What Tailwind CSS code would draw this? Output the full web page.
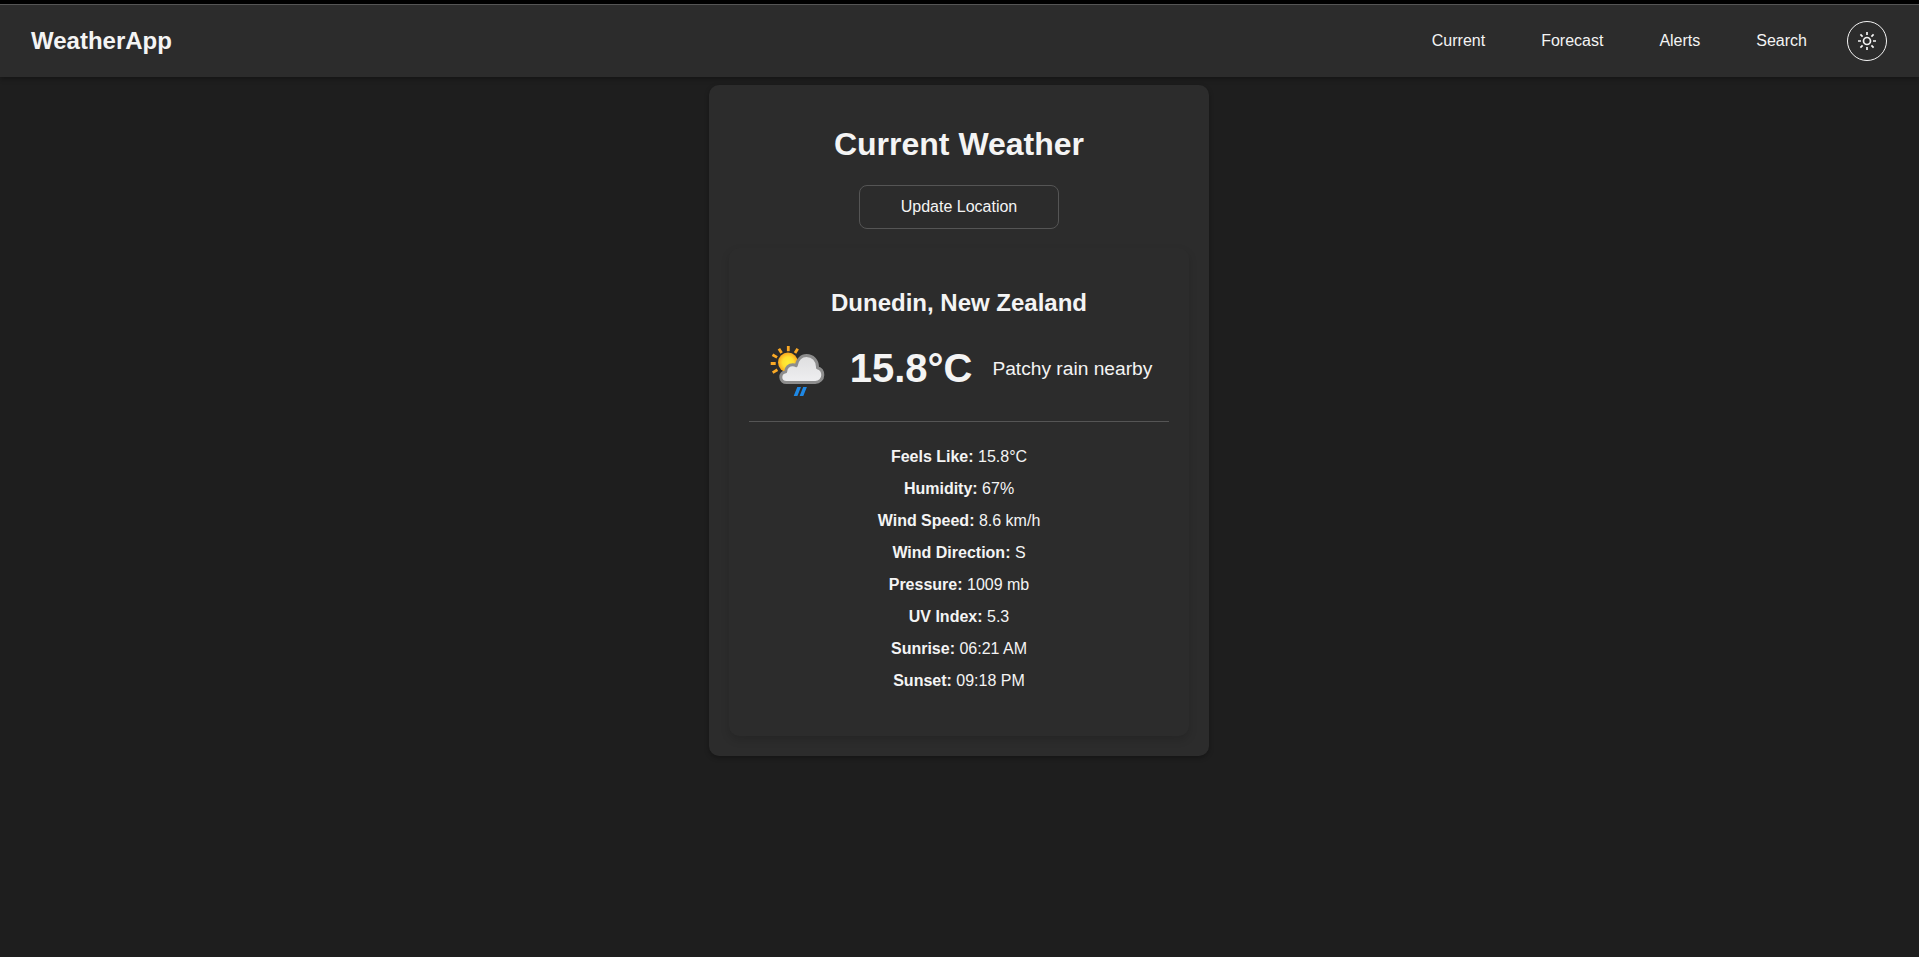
<!DOCTYPE html>
<html lang="en">
<head>
<meta charset="utf-8">
<title>WeatherApp</title>
<script src="https://cdn.jsdelivr.net/npm/@tailwindcss/browser@4"></script>
</head>
<body class="h-screen overflow-hidden bg-[#1e1e1e] font-['Liberation_Sans',Arial,sans-serif] text-base text-[#f4f4f4]">
<div class="h-1 bg-black"></div>
<header class="flex h-[73px] items-center justify-between border-t border-[#555] bg-[#2c2c2c] pl-[31px] pr-8 shadow-[0_2px_5px_rgba(0,0,0,0.3)]">
  <div class="text-2xl font-bold">WeatherApp</div>
  <nav class="flex items-center gap-10 leading-[17px]">
    <a class="px-2 pb-px">Current</a>
    <a class="px-2 pb-px">Forecast</a>
    <a class="px-2 pb-px">Alerts</a>
    <a class="pl-2 pb-px">Search</a>
    <button class="flex size-10 items-center justify-center rounded-full border border-[#f4f4f4]" aria-label="Toggle theme">
      <svg class="size-5" viewBox="0 0 20 20" fill="none" stroke="#f4f4f4" stroke-width="1.7">
        <circle cx="10" cy="10" r="3.5"/>
        <path d="M10 1v3M10 16v3M1 10h3M16 10h3M3.400 3.400l2.200 2.200M14.400 14.400l2.200 2.200M3.400 16.600l2.200-2.200M14.400 5.600l2.200-2.200"/>
      </svg>
    </button>
  </nav>
</header>
<main class="ml-[709px] mt-2 h-[671px] w-[500px] rounded-[10px] bg-[#2c2c2c] px-5 pt-[41px] text-center shadow-[0_2px_5px_rgba(0,0,0,0.3)]">
  <h1 class="text-[32px] font-bold leading-[37px]">Current Weather</h1>
  <button class="mt-[22px] h-11 w-[200px] rounded-lg border border-[#555] pb-px leading-[17px]">Update Location</button>
  <section class="mt-[19px] h-[488px] rounded-[10px] bg-[#2c2c2c] px-5 pt-[41px] shadow-[0_4px_8px_rgba(0,0,0,0.15)]">
    <h2 class="text-2xl font-bold leading-7">Dunedin, New Zealand</h2>
    <div class="mt-[19px] flex items-center justify-center gap-5 border-b border-[#555] pb-[21px]">
      <svg class="size-16 shrink-0" viewBox="0 0 64 64">
        <defs>
          <radialGradient id="sun"><stop offset="0" stop-color="#ffee35"/><stop offset=".55" stop-color="#ffdf30"/><stop offset="1" stop-color="#faa51e"/></radialGradient>
          <linearGradient id="cloud" x1="0" y1="0" x2="0" y2="1"><stop offset="0" stop-color="#dededf"/><stop offset="1" stop-color="#efeff1"/></linearGradient>
        </defs>
        <circle cx="22" cy="26.500" r="10" fill="url(#sun)"/>
        <path d="M22.300 10v5.300M12.900 12.700l2.700 4.400M31.700 12.700 29 17.100M6.500 18.700l4.600 2.700M4.700 27.500h5M6.700 36.600l4.700-2.800" stroke="#faa926" stroke-width="2.800"/>
        <path d="M20.500 46.500c-3.200 0-5.700-2.200-5.700-5.200 0-2.900 2.100-5 4.900-5.500 0-4.300 3.300-7 7.100-7 1.400 0 2.400.3 3.400.8C31.400 23.500 35.300 19.500 40.500 19.500 46.800 19.500 51.500 24.500 51.500 31v.7c3.200.9 5.300 3.700 5.300 7.200 0 4.300-3.300 7.600-7.600 7.600z" fill="url(#cloud)" stroke="#8d8d8d" stroke-width="3" stroke-linejoin="round"/>
        <path d="M31.300 51H35l-3.600 9h-3.700zM37.200 51h3.700l-3.600 9h-3.700z" fill="#1e88e5"/>
      </svg>
      <span class="text-[40px] font-bold leading-[46px]">15.8°C</span>
      <span class="whitespace-nowrap pt-0.5 text-[19.2px]">Patchy rain nearby</span>
    </div>
    <ul class="mt-[19px] leading-8 [&_b]:font-bold">
      <li><b>Feels Like:</b> 15.8°C</li>
      <li><b>Humidity:</b> 67%</li>
      <li><b>Wind Speed:</b> 8.6 km/h</li>
      <li><b>Wind Direction:</b> S</li>
      <li><b>Pressure:</b> 1009 mb</li>
      <li><b>UV Index:</b> 5.3</li>
      <li><b>Sunrise:</b> 06:21 AM</li>
      <li><b>Sunset:</b> 09:18 PM</li>
    </ul>
  </section>
</main>
</body>
</html>
